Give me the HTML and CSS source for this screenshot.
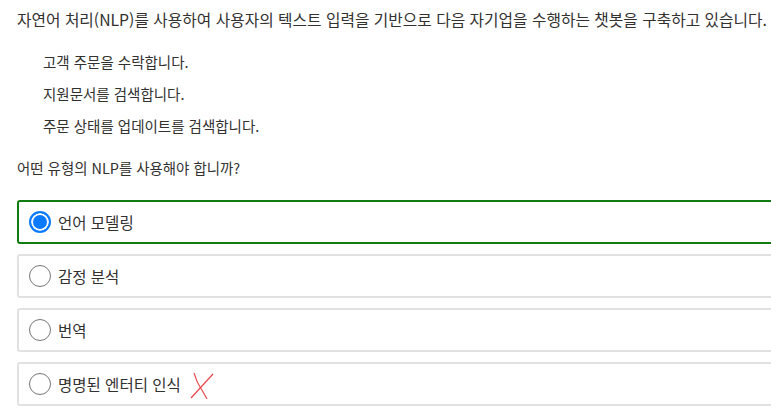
FILE: index.html
```html
<!DOCTYPE html>
<html lang="ko">
<head>
<meta charset="utf-8">
<link rel="stylesheet" href="styles.css">
</head>
<body>
<div class="page">
  <p class="intro">자연어 처리(NLP)를 사용하여 사용자의 텍스트 입력을 기반으로 다음 자기업을 수행하는 챗봇을 구축하고 있습니다.</p>
  <ul class="tasks">
    <li>고객 주문을 수락합니다.</li>
    <li>지원문서를 검색합니다.</li>
    <li>주문 상태를 업데이트를 검색합니다.</li>
  </ul>
  <p class="question">어떤 유형의 NLP를 사용해야 합니까?</p>
  <div class="options">
    <div class="option selected"><span class="radio"></span><span class="label">언어 모델링</span></div>
    <div class="option"><span class="radio"></span><span class="label">감정 분석</span></div>
    <div class="option"><span class="radio"></span><span class="label">번역</span></div>
    <div class="option"><span class="radio"></span><span class="label">명명된 엔터티 인식</span>
      <svg class="wrong" width="26" height="28" viewBox="0 0 26 28"><path d="M4 1 C6 5 6 9 9 13 L17 27" fill="none" stroke="#e8474c" stroke-width="1.2"/><path d="M23 2 L1 26" fill="none" stroke="#e8474c" stroke-width="1.2"/></svg>
    </div>
  </div>
</div>
</body>
</html>
```
FILE: styles.css
```css
html, body {
  margin: 0;
  padding: 0;
  background: #fff;
}
body {
  font-family: "Noto Sans CJK KR", "Noto Sans", sans-serif;
  color: #323130;
  overflow: hidden;
}
.page {
  padding: 8px 0 0 17px;
}
.intro {
  margin: 0;
  font-size: 15.75px;
  line-height: 24px;
  white-space: nowrap;
}
.tasks {
  list-style: none;
  margin: 18px 0 0 0;
  padding: 0 0 0 26px;
  font-size: 14.5px;
}
.tasks li {
  line-height: 24px;
  margin-bottom: 8px;
}
.question {
  margin: 18px 0 0 0;
  font-size: 14.45px;
  line-height: 24px;
}
.options {
  margin-top: 20px;
  width: 780px;
  display: flex;
  flex-direction: column;
  gap: 10px;
}
.option {
  box-sizing: border-box;
  height: 44px;
  border: 2px solid #e1e1e1;
  border-radius: 3px;
  display: flex;
  align-items: center;
  padding-left: 10px;
  font-size: 15.5px;
}
.option.selected {
  border-color: #107c10;
}
.radio {
  box-sizing: border-box;
  width: 22px;
  height: 22px;
  border-radius: 50%;
  border: 1px solid #767676;
  margin-right: 7px;
  flex: none;
}
.selected .radio {
  border: 2px solid #0a7bff;
  background: #0a7bff;
  box-shadow: inset 0 0 0 2px #fff;
}
.wrong {
  margin-left: 9px;
  margin-top: 4px;
}
```
